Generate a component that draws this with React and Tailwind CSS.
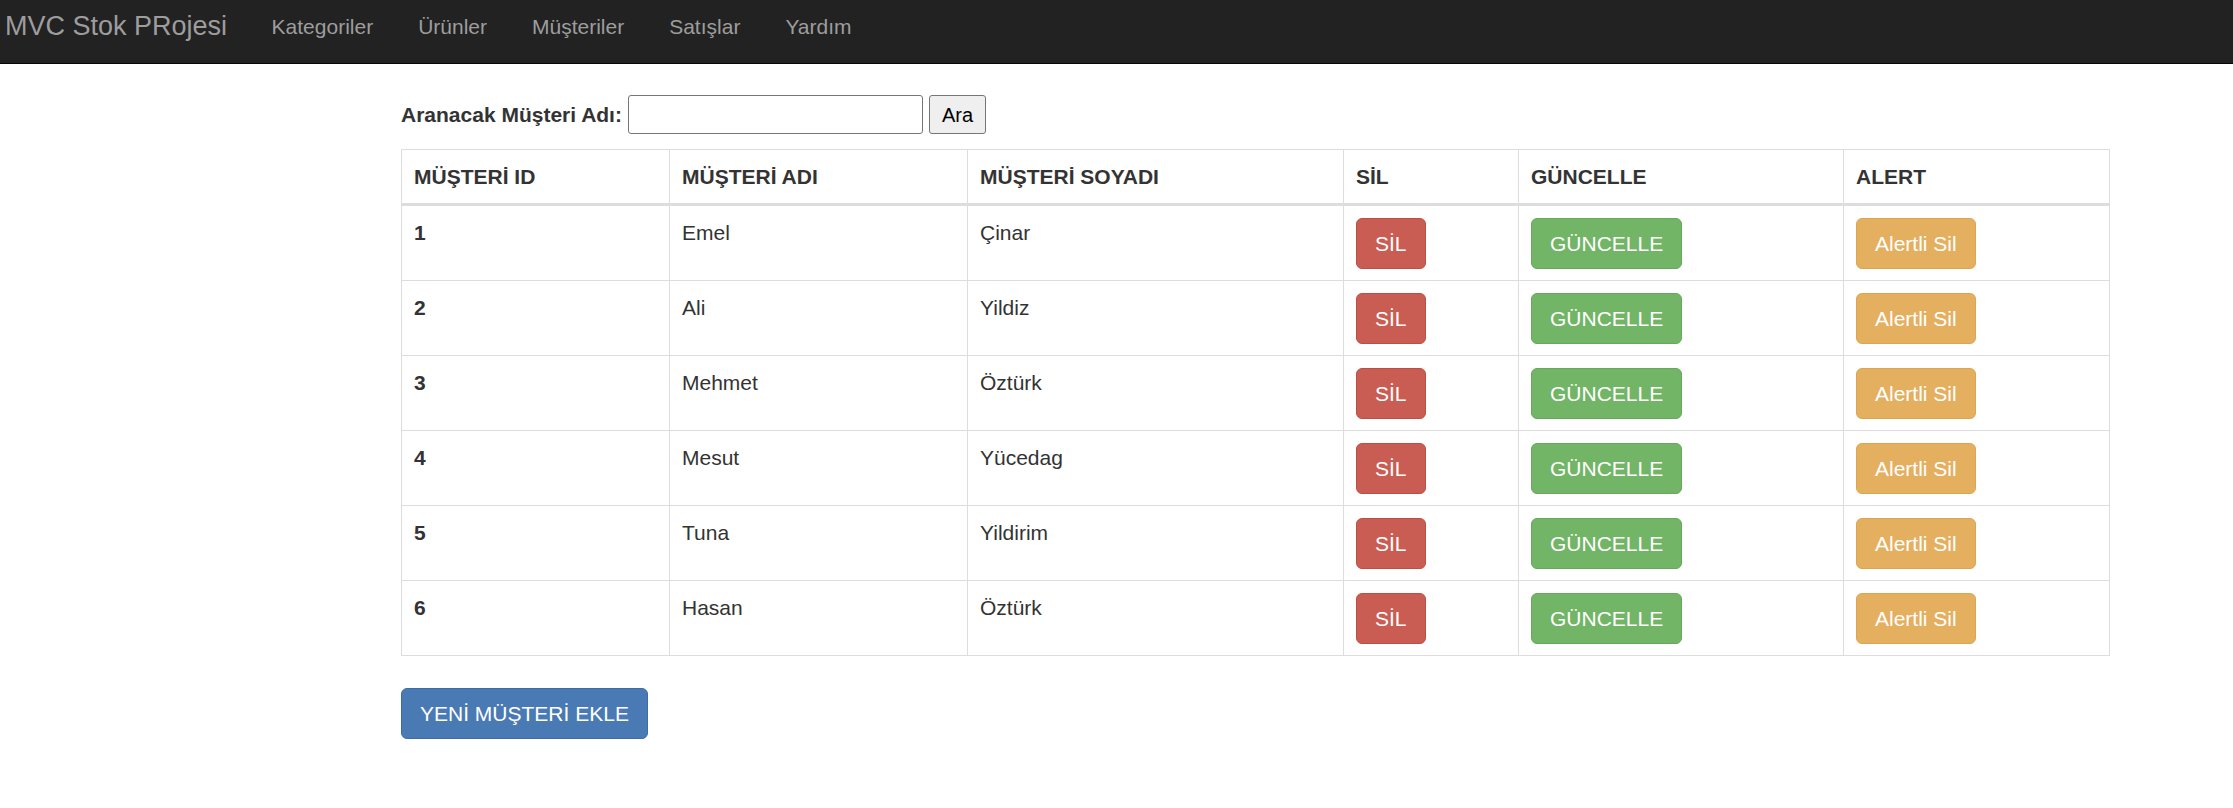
import React from "react";

const navLinks = ["Kategoriler", "Ürünler", "Müşteriler", "Satışlar", "Yardım"];

const customers = [
  { id: 1, ad: "Emel", soyad: "Çinar" },
  { id: 2, ad: "Ali", soyad: "Yildiz" },
  { id: 3, ad: "Mehmet", soyad: "Öztürk" },
  { id: 4, ad: "Mesut", soyad: "Yücedag" },
  { id: 5, ad: "Tuna", soyad: "Yildirim" },
  { id: 6, ad: "Hasan", soyad: "Öztürk" },
];

const headers = [
  { label: "MÜŞTERİ ID", w: "w-[268px]" },
  { label: "MÜŞTERİ ADI", w: "w-[298px]" },
  { label: "MÜŞTERİ SOYADI", w: "w-[376px]" },
  { label: "SİL", w: "w-[175px]" },
  { label: "GÜNCELLE", w: "w-[325px]" },
  { label: "ALERT", w: "w-[266px]" },
];

const btnBase =
  "inline-flex items-center h-[51px] px-[18px] border rounded-[6px] text-[21px] text-white leading-[30px]";

const App = () => {
  return (
    <div className="min-h-[808px] bg-white text-[#333] font-['Liberation_Sans',Arial,sans-serif] text-[21px] leading-[30px]">
      <nav className="flex h-[64px] bg-[#222] border-b border-[#080808]">
        <a className="pl-[5px] pr-[22px] pt-[11px] text-[27px] leading-[30px] text-[#9d9d9d]">
          MVC Stok PRojesi
        </a>
        {navLinks.map((l) => (
          <a
            key={l}
            className="px-[22.5px] pt-[12px] text-[21px] leading-[30px] text-[#9d9d9d]"
          >
            {l}
          </a>
        ))}
      </nav>

      <div className="ml-[401px] w-[1708px]">
        <form className="flex items-center gap-[6px] mt-[31px]">
          <label className="font-bold">Aranacak Müşteri Adı:</label>
          <input
            type="text"
            className="w-[295px] h-[39px] border border-[#767676] rounded-[3px] px-[3px] text-[20px]"
          />
          <button
            type="button"
            className="h-[39px] w-[57px] bg-[#efefef] border border-[#767676] rounded-[3px] text-[20px] text-black"
          >
            Ara
          </button>
        </form>

        <table className="mt-[15px] w-[1708px] table-fixed border-collapse border border-[#ddd]">
          <thead>
            <tr>
              {headers.map((h) => (
                <th
                  key={h.label}
                  className={`${h.w} text-left align-bottom font-bold px-[12px] pt-[12px] pb-[11px] border border-[#ddd] border-b-[3px]`}
                >
                  {h.label}
                </th>
              ))}
            </tr>
          </thead>
          <tbody>
            {customers.map((c) => (
              <tr key={c.id}>
                <td className="align-top px-[12px] pt-[12px] pb-[11px] border border-[#ddd] font-bold">
                  {c.id}
                </td>
                <td className="align-top px-[12px] pt-[12px] pb-[11px] border border-[#ddd]">
                  {c.ad}
                </td>
                <td className="align-top px-[12px] pt-[12px] pb-[11px] border border-[#ddd]">
                  {c.soyad}
                </td>
                <td className="align-top px-[12px] pt-[12px] pb-[11px] border border-[#ddd]">
                  <a className={`${btnBase} bg-[#c95d54] border-[#bf4d44]`}>SİL</a>
                </td>
                <td className="align-top px-[12px] pt-[12px] pb-[11px] border border-[#ddd]">
                  <a className={`${btnBase} bg-[#72b566] border-[#66a95a]`}>GÜNCELLE</a>
                </td>
                <td className="align-top px-[12px] pt-[12px] pb-[11px] border border-[#ddd]">
                  <a className={`${btnBase} bg-[#e4af5f] border-[#dda550]`}>Alertli Sil</a>
                </td>
              </tr>
            ))}
          </tbody>
        </table>

        <a className={`${btnBase} mt-[32px] bg-[#4a7ab4] border-[#3f6ca5]`}>
          YENİ MÜŞTERİ EKLE
        </a>
      </div>
    </div>
  );
};

export default App;
